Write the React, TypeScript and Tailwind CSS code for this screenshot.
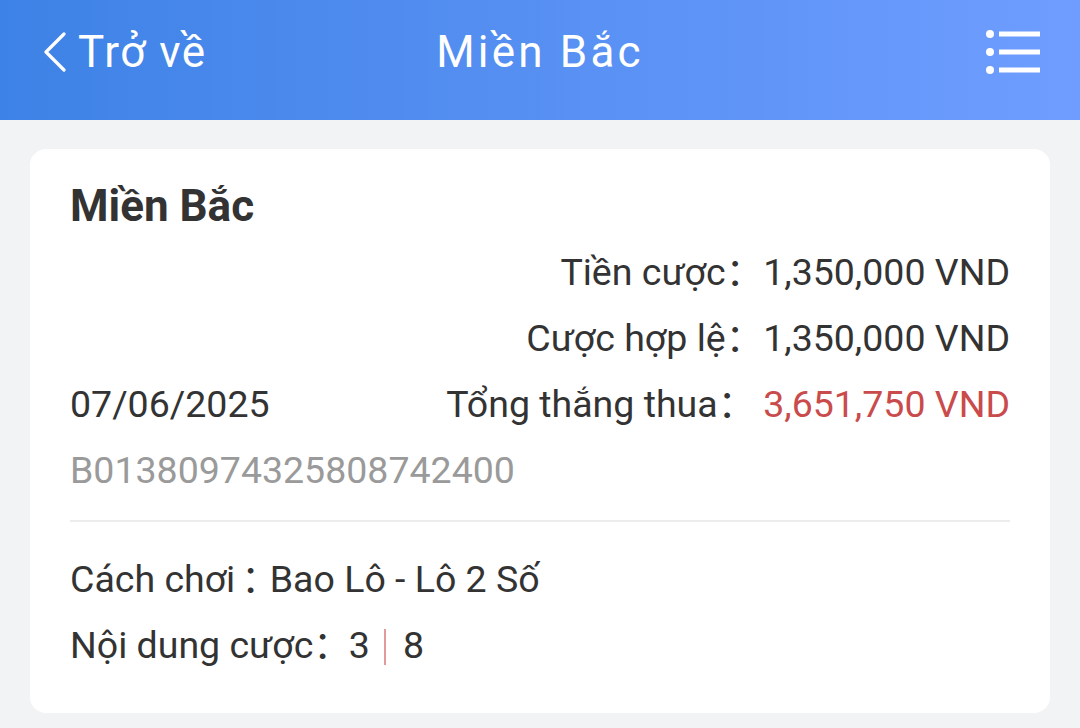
import React from "react";

const FONT = { fontFamily: 'Roboto, "Noto Sans CJK SC", sans-serif' };

function Row({ label, value, red, gap }: { label: string; value: string; red?: boolean; gap?: string }) {
  return (
    <div className="flex justify-end items-center leading-[66px] h-[66px]">
      <span className="text-[#333333]">{label}</span>
      <span className={(red ? "text-[#c94b4b] " : "text-[#333333] ") + (gap ?? "")}>{value}</span>
    </div>
  );
}

export default function App() {
  return (
    <div className="w-[1080px] h-[728px] bg-[#f2f3f5] overflow-hidden" style={FONT}>
      <header className="h-[120px] pb-[16px] bg-linear-to-r from-[#3d82e6] to-[#6e9dff] grid grid-cols-3 items-center text-white">
        <div className="flex items-center pl-[44px]">
          <svg width="24" height="42" viewBox="0 0 24 42" className="mr-[10px]">
            <path d="M20 3 L2 21 L20 39" fill="none" stroke="white" strokeWidth="3.2" strokeLinecap="round" strokeLinejoin="round" />
          </svg>
          <span className="text-[44px] leading-none tracking-[1.5px]">Trở về</span>
        </div>
        <div className="text-center text-[44px] leading-none tracking-[3.2px]">Miền Bắc</div>
        <div className="flex justify-end pr-[38px]">
          <svg width="58" height="46" viewBox="0 0 58 46">
            <circle cx="6" cy="5" r="4" fill="white" />
            <circle cx="6" cy="23" r="4" fill="white" />
            <circle cx="6" cy="41" r="4" fill="white" />
            <rect x="15" y="2.5" width="41" height="5" fill="white" />
            <rect x="15" y="20.5" width="41" height="5" fill="white" />
            <rect x="15" y="38.5" width="41" height="5" fill="white" />
          </svg>
        </div>
      </header>
      <main className="pt-[29px] px-[30px]">
        <div className="bg-white rounded-[16px] px-[40px] pt-[27px] pb-[35px] text-[37.5px]">
          <div className="text-[44px] font-bold leading-[60px] h-[60px] text-[#333333]">Miền Bắc</div>
          <div className="mt-[3px] flex justify-between items-end">
            <div className="text-[#333333] leading-[66px] h-[66px]">07/06/2025</div>
            <div className="flex flex-col">
              <Row label="Tiền cược：" value="1,350,000 VND" />
              <Row label="Cược hợp lệ：" value="1,350,000 VND" />
              <Row label="Tổng thắng thua：" value="3,651,750 VND" red gap="ml-[8px]" />
            </div>
          </div>
          <div className="text-[#9a9a9a] leading-[66px] h-[66px]">B01380974325808742400</div>
          <div className="mt-[17px] h-[2px] bg-[#ececec]" />
          <div className="mt-[24px] flex items-center leading-[66px] h-[66px] text-[#333333]">
            <span>Cách chơi</span>
            <span className="ml-[6px] tracking-[-9px]">：</span>
            <span>Bao Lô - Lô 2 Số</span>
          </div>
          <div className="flex items-center leading-[66px] h-[66px] text-[#333333]">
            <span>Nội dung cược：</span>
            <span className="ml-[-2px]">3</span>
            <span className="inline-block w-[2px] h-[36px] bg-[#e39a9a] ml-[14px] mr-[17px] mt-[4px]" />
            <span>8</span>
          </div>
        </div>
      </main>
    </div>
  );
}
